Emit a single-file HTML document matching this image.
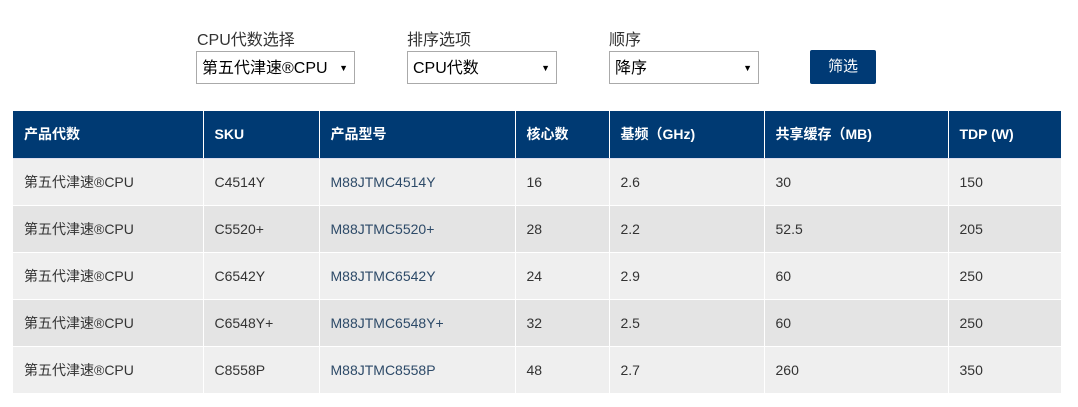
<!DOCTYPE html>
<html><head><meta charset="utf-8"><style>
body{margin:0;background:#fff;font-family:"Liberation Sans","Noto Sans CJK SC",sans-serif;width:1078px;height:407px;position:relative;overflow:hidden}
.lbl{position:absolute;top:26px;font-size:16px;color:#333}
.sel{position:absolute;top:51px;height:33px;box-sizing:border-box;border:1px solid #aaa;background:#fff;font-size:16px;color:#000;line-height:33px;padding-left:5px}
.sel:after{content:"▼";position:absolute;right:6px;top:0;font-size:9px}
.btn{position:absolute;left:810px;top:50px;width:66px;height:34px;background:#003a75;border-radius:2px;color:#fff;font-size:15px;text-align:center;line-height:34px}
table{position:absolute;left:13px;top:111px;border-collapse:collapse;width:1048px;font-size:14px}
th{background:#003a73;color:#fff;text-align:left;font-weight:bold;height:47px;padding:0 0 0 11px;border-left:1px solid #fff;box-sizing:border-box;border-bottom:1px solid #dde}
td{height:47px;box-sizing:border-box;padding:0 0 0 11px;border-left:1px solid #fff;border-top:1px solid #fff;color:#333}
th:first-child,td:first-child{border-left:none}
tr:nth-child(odd) td{background:#efefef}
tr:nth-child(even) td{background:#e4e4e4}
td.m{color:#2d4a68}
</style></head><body>
<div class="lbl" style="left:197px">CPU代数选择</div>
<div class="lbl" style="left:407px">排序选项</div>
<div class="lbl" style="left:609px">顺序</div>
<div class="sel" style="left:196px;width:159px">第五代津速®CPU</div>
<div class="sel" style="left:407px;width:150px">CPU代数</div>
<div class="sel" style="left:609px;width:150px">降序</div>
<div class="btn">筛选</div>
<table>
<thead><tr><th style="width:190px">产品代数</th><th style="width:116px">SKU</th><th style="width:196px">产品型号</th><th style="width:94px">核心数</th><th style="width:155px">基频（GHz)</th><th style="width:184px">共享缓存（MB)</th><th>TDP (W)</th></tr></thead>
<tbody>
<tr><td>第五代津速®CPU</td><td>C4514Y</td><td class="m">M88JTMC4514Y</td><td>16</td><td>2.6</td><td>30</td><td>150</td></tr>
<tr><td>第五代津速®CPU</td><td>C5520+</td><td class="m">M88JTMC5520+</td><td>28</td><td>2.2</td><td>52.5</td><td>205</td></tr>
<tr><td>第五代津速®CPU</td><td>C6542Y</td><td class="m">M88JTMC6542Y</td><td>24</td><td>2.9</td><td>60</td><td>250</td></tr>
<tr><td>第五代津速®CPU</td><td>C6548Y+</td><td class="m">M88JTMC6548Y+</td><td>32</td><td>2.5</td><td>60</td><td>250</td></tr>
<tr><td>第五代津速®CPU</td><td>C8558P</td><td class="m">M88JTMC8558P</td><td>48</td><td>2.7</td><td>260</td><td>350</td></tr>
</tbody></table>
</body></html>
